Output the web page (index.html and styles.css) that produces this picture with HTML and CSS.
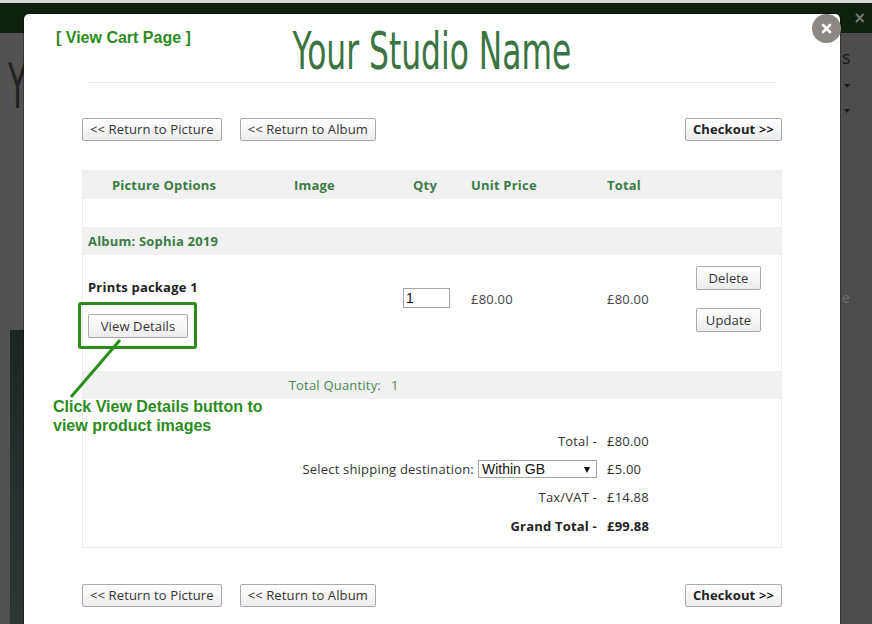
FILE: index.html
```html
<!DOCTYPE html>
<html>
<head>
<meta charset="utf-8">
<title>View Cart</title>
<link rel="stylesheet" href="styles.css">
</head>
<body>
<div class="backdrop">
  <div class="topgap"></div>
  <div class="topbar"><span class="bar-x">×</span></div>
  <div class="behind">
    <div class="behind-left">
      <div class="behind-y"><span>Y</span></div>
      <div class="behind-photo"></div>
    </div>
    <div class="behind-right">
      <div class="behind-s">s</div>
      <div class="tri"></div>
      <div class="tri second"></div>
      <div class="behind-e">e</div>
    </div>
  </div>
</div>

<div class="modal">
  <header class="m-head">
    <a class="cart-link">[ View Cart Page ]</a>
    <h1 class="studio"><span>Your Studio Name</span></h1>
  </header>
  <div class="rule"></div>

  <div class="content">
    <div class="navrow">
      <div class="navleft">
        <button class="btn">&lt;&lt; Return to Picture</button>
        <button class="btn">&lt;&lt; Return to Album</button>
      </div>
      <button class="btn strong">Checkout &gt;&gt;</button>
    </div>

    <div class="cart">
      <div class="row head">
        <div class="center">Picture Options</div>
        <div class="center">Image</div>
        <div class="center">Qty</div>
        <div class="pad">Unit Price</div>
        <div class="pad">Total</div>
        <div></div>
      </div>
      <div class="row blank"></div>
      <div class="row album"><div class="all">Album: Sophia 2019</div></div>
      <div class="row item">
        <div class="opt">
          <div class="pname">Prints package 1</div>
          <button class="btn small details">View Details</button>
        </div>
        <div></div>
        <div class="qtycell"><input class="qty" type="text" value="1"></div>
        <div class="price">£80.00</div>
        <div class="price">£80.00</div>
        <div class="actions">
          <button class="btn small act">Delete</button>
          <button class="btn small act">Update</button>
        </div>
      </div>
      <div class="row qtyrow">
        <div class="tq-label">Total Quantity:</div>
        <div class="tq-val">1</div>
      </div>
      <div class="totals">
        <div class="lbl">Total -</div><div class="val">£80.00</div>
        <div class="lbl ship">Select shipping destination:
          <span class="selwrap"><select class="sel"><option>Within GB</option></select></span>
        </div><div class="val">£5.00</div>
        <div class="lbl">Tax/VAT -</div><div class="val">£14.88</div>
        <div class="lbl grand">Grand Total -</div><div class="val grand">£99.88</div>
      </div>
    </div>

    <div class="navrow bottom">
      <div class="navleft">
        <button class="btn">&lt;&lt; Return to Picture</button>
        <button class="btn">&lt;&lt; Return to Album</button>
      </div>
      <button class="btn strong">Checkout &gt;&gt;</button>
    </div>
  </div>
</div>

<div class="close-btn">
  <svg width="29" height="29" viewBox="0 0 29 29"><path d="M11 11 L18 18 M18 11 L11 18" stroke="#fff" stroke-width="2.6" stroke-linecap="round"/></svg>
</div>

<div class="callout-box"></div>
<svg class="callout-line" width="80" height="80" viewBox="0 0 80 80"><line x1="60" y1="10" x2="11" y2="67" stroke="#2b8c1c" stroke-width="3"/></svg>
<div class="callout-text">Click View Details button to<br>view product images</div>
</body>
</html>
```

FILE: styles.css
```css
* { box-sizing: border-box; }
html, body { margin: 0; }
body {
  width: 872px;
  height: 624px;
  overflow: hidden;
  position: relative;
  background: #4c4c4c;
  font-family: "Open Sans", "DejaVu Sans", sans-serif;
  font-size: 13px;
  color: #333;
}

/* ---------- page behind the overlay ---------- */
.backdrop { display: flex; flex-direction: column; height: 624px; }
.topgap { height: 3px; background: #d6d6d6; }
.topbar {
  height: 30px;
  background: #10200f;
  display: flex;
  justify-content: flex-end;
  align-items: center;
  padding-right: 6px;
}
.bar-x { color: #7b807b; font: bold 15px "DejaVu Sans", sans-serif; }
.behind { flex: 1; display: flex; justify-content: space-between; }
.behind-left { width: 24px; display: flex; flex-direction: column; background: #525252; }
.behind-y {
  margin-top: 22px;
  padding-left: 8px;
  font-family: "DejaVu Sans", sans-serif;
  font-stretch: condensed;
  font-size: 63px;
  line-height: 63px;
  color: #232323;
  height: 63px;
}
.behind-y span { display: inline-block; transform: scaleX(0.55); transform-origin: left center; }
.behind-photo {
  margin-top: 212px;
  margin-left: 10px;
  flex: 1;
  background: linear-gradient(180deg, #1b2522 0%, #263130 60%, #2e3634 100%);
}
.behind-right { width: 32px; padding-left: 2px; color: #1c1c1c; }
.behind-s { margin-top: 14px; font-size: 18px; line-height: 20px; }
.tri {
  margin-top: 17px;
  margin-left: 2px;
  width: 0; height: 0;
  border-left: 3px solid transparent;
  border-right: 3px solid transparent;
  border-top: 4px solid #1c1c1c;
}
.tri.second { margin-top: 21px; }
.behind-e { margin-top: 175px; color: #6e6e6e; font-size: 14px; }

/* ---------- modal ---------- */
.modal {
  position: absolute;
  left: 24px;
  top: 14px;
  width: 816px;
  height: 640px;
  background: #fff;
  border-radius: 5px 5px 0 0;
  box-shadow: 0 0 0 1px rgba(0,0,0,0.3);
}
.m-head {
  display: grid;
  grid-template-columns: 1fr auto 1fr;
  align-items: start;
  padding-top: 7px;
}
.cart-link {
  justify-self: start;
  margin-left: 32px;
  margin-top: 8px;
  font: bold 16px/18px "Liberation Sans", Arial, sans-serif;
  color: #2b8c1c;
  text-decoration: none;
}
.studio {
  margin: 0;
  font-weight: normal;
  font-family: "DejaVu Sans", sans-serif;
  font-stretch: condensed;
  font-size: 52px;
  line-height: 61px;
  color: #3a7443;
  white-space: nowrap;
}
.studio span { display: inline-block; transform: scaleX(0.67); }
.rule { width: 690px; height: 1px; margin: 0 auto; background: #ebebeb; }

.content { width: 700px; margin: 35px auto 0; letter-spacing: 0.2px; }

.navrow { display: flex; justify-content: space-between; align-items: center; }
.navrow.bottom { margin-top: 36px; }
.navleft { display: flex; gap: 18px; }

.btn {
  font-family: "Open Sans", sans-serif;
  font-size: 13px;
  letter-spacing: 0.12px;
  line-height: 17px;
  height: 23px;
  padding: 0 7px;
  color: #333;
  background: linear-gradient(180deg, #ffffff 0%, #f7f7f7 50%, #ececec 100%);
  border: 1px solid #a9a9a9;
  border-radius: 2px;
}
.btn.strong { font-weight: bold; color: #222; padding: 0 7px; }
.btn.small { height: 24px; }

/* ---------- cart table ---------- */
.cart {
  margin-top: 29px;
  border: 1px solid #ececec;
  border-top: 0;
}
.row {
  display: grid;
  grid-template-columns: 162px 139px 82px 136px 88px 1fr;
}
.row.head {
  background: #f1f1f1;
  height: 29px;
  line-height: 31px;
  color: #3b7b46;
  font-weight: bold;
}
.center { text-align: center; }
.pad { padding-left: 5px; }
.row.blank { height: 28px; }
.row.album { background: #f1f1f1; height: 28px; line-height: 28px; }
.all { grid-column: 1 / -1; padding-left: 5px; color: #3b7b46; font-weight: bold; }

.row.item { height: 116px; align-items: start; }
.opt { padding: 23px 0 0 5px; display: flex; flex-direction: column; align-items: flex-start; }
.pname { font-weight: bold; color: #222; line-height: 18px; }
.details { margin-top: 18px; width: 100px; }
.qtycell { padding-top: 33px; display: flex; justify-content: center; padding-left: 3px; }
.qty {
  width: 47px;
  height: 20px;
  border: 1px solid #a5a5a5;
  padding: 0 2px;
  font: 14px "Liberation Sans", Arial, sans-serif;
  color: #111;
}
.price { padding: 35px 0 0 5px; line-height: 18px; color: #444; }
.actions { padding: 11px 0 0 6px; display: flex; flex-direction: column; gap: 18px; align-items: flex-start; }
.act { width: 65px; }

.row.qtyrow { background: #f1f1f1; height: 28px; line-height: 28px; color: #4a8652; }
.tq-label { grid-column: 1 / 3; text-align: right; padding-right: 3px; }
.tq-val { padding-left: 7px; }

.totals {
  display: grid;
  grid-template-columns: 519px 1fr;
  grid-auto-rows: 28px;
  align-items: center;
  padding: 28px 0 8px;
  color: #333;
}
.lbl { text-align: right; padding-right: 5px; display: flex; justify-content: flex-end; align-items: center; gap: 4px; }
.val { padding-left: 5px; }
.grand { font-weight: bold; color: #222; padding-top: 1px; }
.selwrap { position: relative; display: inline-block; }
.selwrap::after {
  content: "";
  position: absolute;
  right: 7px;
  top: 7px;
  border-left: 3.5px solid transparent;
  border-right: 3.5px solid transparent;
  border-top: 6px solid #111;
  pointer-events: none;
}
.sel {
  -webkit-appearance: none;
  appearance: none;
  width: 119px;
  height: 18px;
  border: 1px solid #a6a6a6;
  border-radius: 0;
  background: #fff;
  padding: 0 0 0 3px;
  font: 14px/16px "Liberation Sans", Arial, sans-serif;
  letter-spacing: 0;
  color: #111;
}

/* ---------- overlays ---------- */
.close-btn {
  position: absolute;
  left: 812px;
  top: 14px;
  width: 29px;
  height: 29px;
  border-radius: 50%;
  background: #8c8782;
}
.close-btn svg { display: block; }

.callout-box {
  position: absolute;
  left: 78px;
  top: 302px;
  width: 119px;
  height: 47px;
  border: 3px solid #2b8c1c;
  border-radius: 3px;
}
.callout-line { position: absolute; left: 60px; top: 330px; }
.callout-text {
  position: absolute;
  left: 53px;
  top: 397px;
  font: bold 16px/19px "Liberation Sans", Arial, sans-serif;
  color: #2b8c1c;
}
```
